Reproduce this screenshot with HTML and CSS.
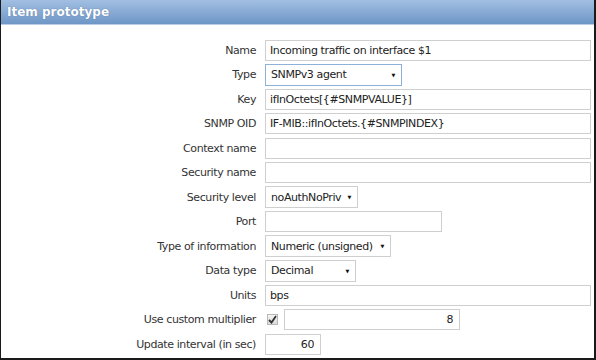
FILE: index.html
```html
<!DOCTYPE html>
<html lang="en">
<head>
  <meta charset="UTF-8" />
  <title>Item prototype</title>
  <link rel="stylesheet" href="styles.css">
</head>
<body>
  <div class="frame">
    <div class="header">Item prototype</div>

    <form class="item-form">
      <label>Name</label>
      <div class="field"><input class="wide" type="text" value="Incoming traffic on interface $1"></div>

      <label>Type</label>
      <div class="field"><div class="select focused w-type">SNMPv3 agent<span class="arrow">&#9660;</span></div></div>

      <label>Key</label>
      <div class="field"><input class="wide" type="text" value="ifInOctets[{#SNMPVALUE}]"></div>

      <label>SNMP OID</label>
      <div class="field"><input class="wide" type="text" value="IF-MIB::ifInOctets.{#SNMPINDEX}"></div>

      <label>Context name</label>
      <div class="field"><input class="wide" type="text" value=""></div>

      <label>Security name</label>
      <div class="field"><input class="wide" type="text" value=""></div>

      <label>Security level</label>
      <div class="field"><div class="select w-level">noAuthNoPriv<span class="arrow">&#9660;</span></div></div>

      <label>Port</label>
      <div class="field"><input class="port" type="text" value=""></div>

      <label>Type of information</label>
      <div class="field"><div class="select w-info">Numeric (unsigned)<span class="arrow">&#9660;</span></div></div>

      <label>Data type</label>
      <div class="field"><div class="select w-data">Decimal<span class="arrow">&#9660;</span></div></div>

      <label>Units</label>
      <div class="field"><input class="wide" type="text" value="bps"></div>

      <label>Use custom multiplier</label>
      <div class="field">
        <span class="check">
          <svg width="9" height="9" viewBox="0 0 9 9"><path d="M1 5 L3.5 7.5 L8 1" fill="none" stroke="#333" stroke-width="1.8"/></svg>
        </span>
        <input class="multiplier num" type="text" value="8">
      </div>

      <label>Update interval (in sec)</label>
      <div class="field"><input class="interval num" type="text" value="60"></div>
    </form>
  </div>
</body>
</html>
```

FILE: styles.css
```css
* {
  box-sizing: border-box;
  margin: 0;
  padding: 0;
}

body {
  font-family: 'DejaVu Sans', Verdana, sans-serif;
  font-size: 11px;
  color: #2b2b2b;
  background: #fff;
}

.frame {
  width: 596px;
  height: 360px;
  border-left: 1px solid #1a1a1a;
  border-right: 2px solid #1a1a1a;
  border-bottom: 2px solid #1a1a1a;
  overflow: hidden;
}

.header {
  height: 25px;
  padding: 5px 6px 0;
  background: linear-gradient(#a2bfe2, #6e96c6);
  border-bottom: 1px solid #b9cde6;
  color: #fff;
  font-weight: bold;
  font-size: 12px;
  text-shadow: 0 0 1px rgba(40, 70, 110, 0.6);
}

.item-form {
  display: grid;
  grid-template-columns: 255px 1fr;
  grid-auto-rows: 24.5px;
  column-gap: 9px;
  padding-top: 13px;
  padding-right: 3px;
}

.item-form label {
  display: flex;
  align-items: center;
  justify-content: flex-end;
  font-size: 11px;
  letter-spacing: -0.4px;
  color: #333;
}

.field {
  display: flex;
  align-items: center;
  gap: 6px;
}

input {
  height: 21px;
  border: 1px solid #cfcfcf;
  padding: 0 4px;
  font-family: inherit;
  font-size: 11px;
  letter-spacing: -0.4px;
  color: #222;
  background: #fff;
  outline: none;
}

input.wide {
  width: 326px;
}

input.port {
  width: 177px;
}

input.num {
  text-align: right;
  padding-right: 6px;
}

input.multiplier {
  width: 176px;
}

input.interval {
  width: 56px;
}

.select {
  position: relative;
  height: 22px;
  display: flex;
  align-items: center;
  border: 1px solid #cfcfcf;
  padding-left: 5px;
  font-size: 11px;
  letter-spacing: -0.4px;
  color: #222;
}

.select.focused {
  border-color: #8fb1d9;
}

.select .arrow {
  position: absolute;
  right: 6px;
  top: 7px;
  font-size: 5px;
  color: #111;
}

.w-type { width: 137px; }
.w-level { width: 93px; }
.w-info { width: 126px; }
.w-data { width: 91px; }

.check {
  width: 11px;
  height: 11px;
  margin-left: 2px;
  border: 1px solid #b8b8b8;
  background: linear-gradient(#f4f4f4, #dcdcdc);
  display: flex;
  align-items: center;
  justify-content: center;
}
```
